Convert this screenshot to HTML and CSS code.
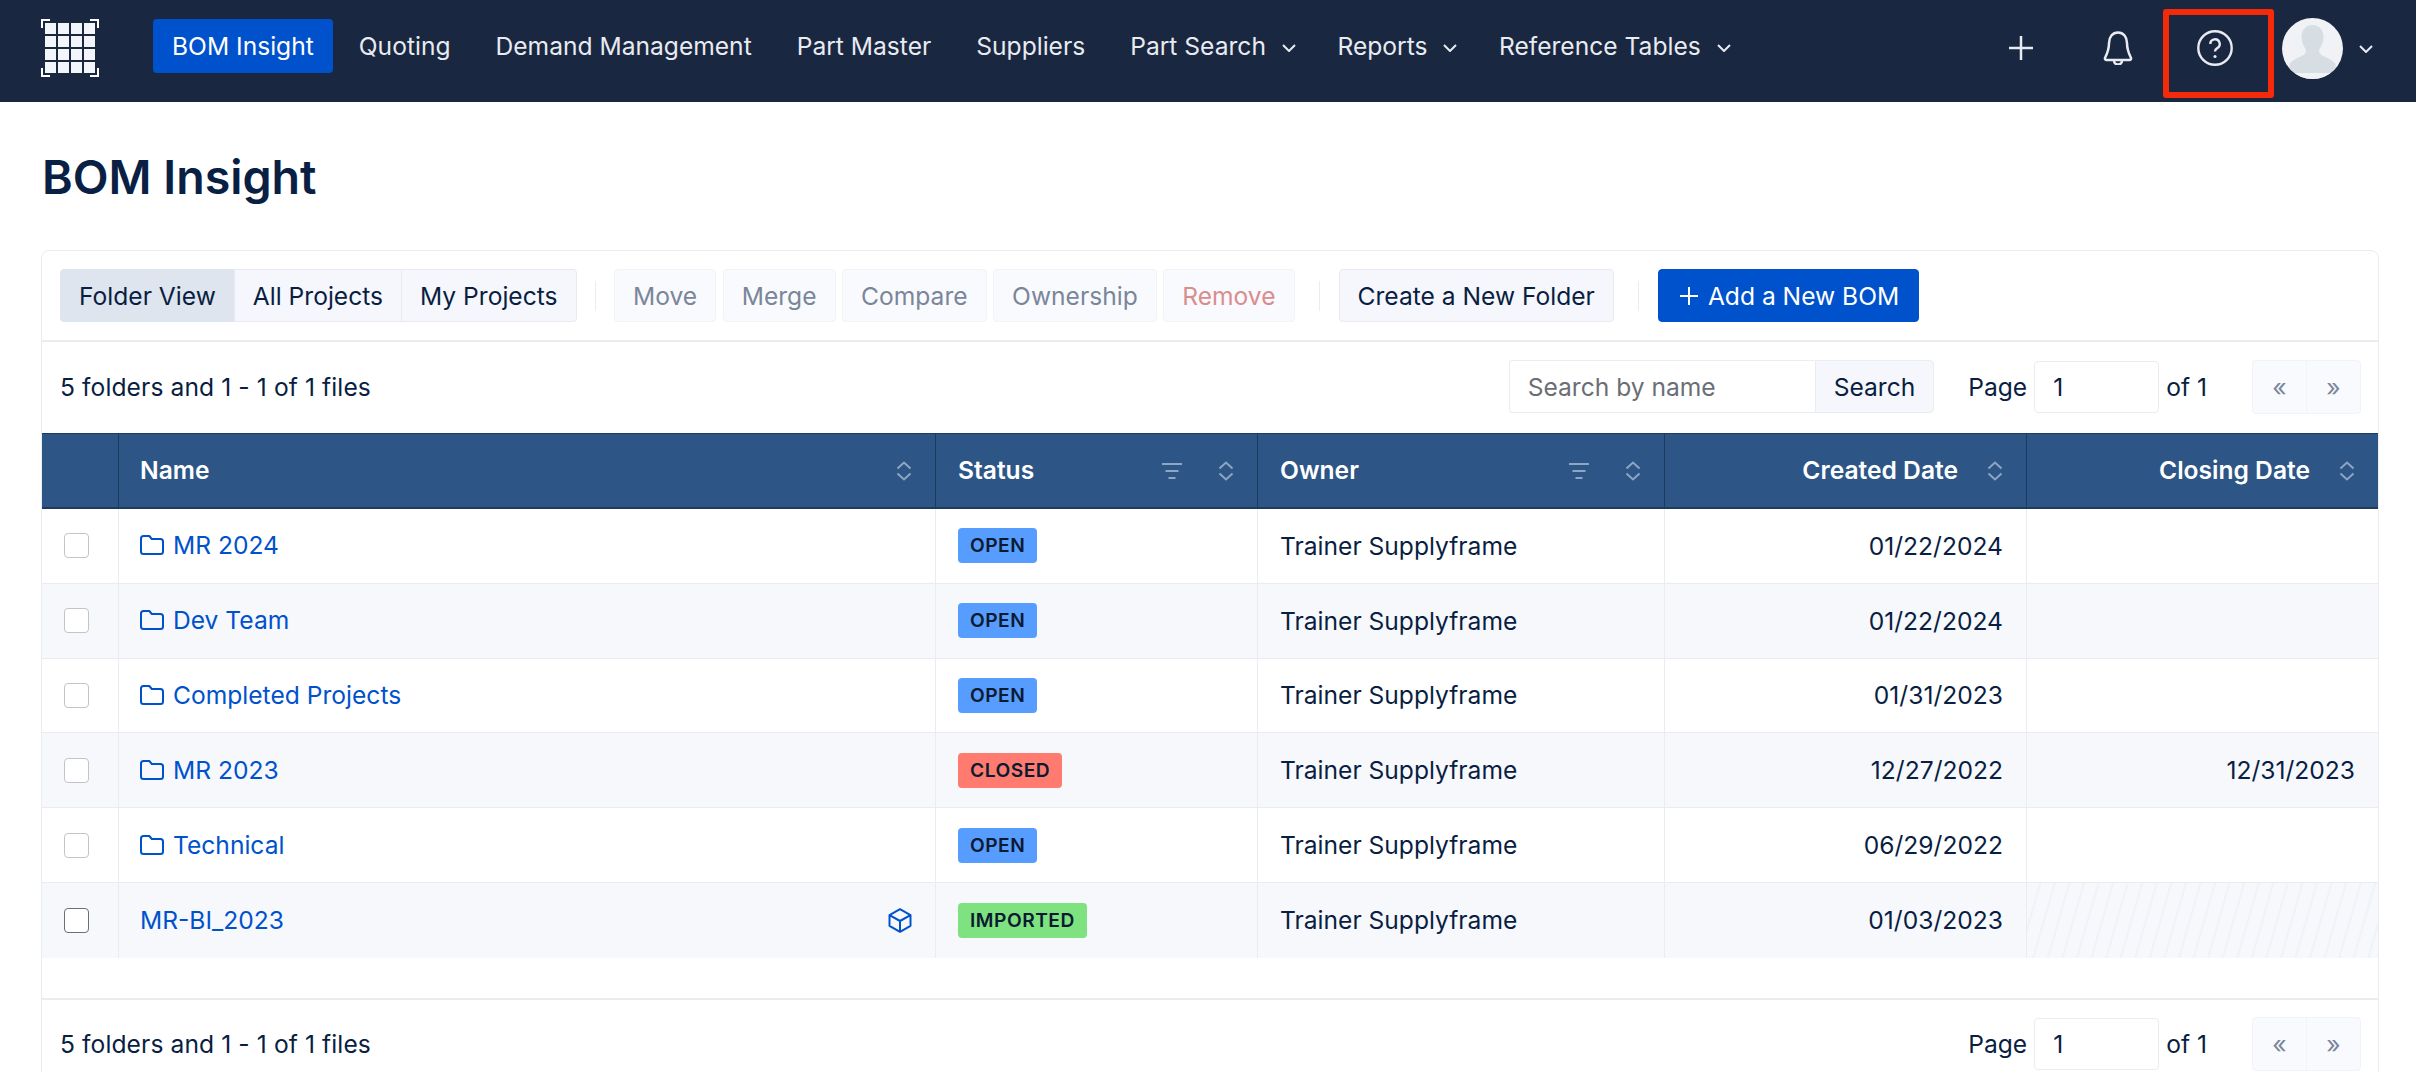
FILE: index.html
```html
<!DOCTYPE html>
<html lang="en">
<head>
    <meta charset="UTF-8">
    <title>BOM Insight</title>
    <link rel="stylesheet" href="styles.css">
</head>
<body>
    <svg class="sprites" width="0" height="0">
        <symbol id="sort" viewBox="0 0 16 20"><path d="M1.5 7.5L8 1.5l6.5 6M1.5 12.5L8 18.5l6.5-6" fill="none" stroke="currentColor" stroke-width="2"/></symbol>
        <symbol id="filter" viewBox="0 0 20 16"><path d="M0 1h20M3.500 8h13M6.500 15h7" fill="none" stroke="currentColor" stroke-width="2"/></symbol>
        <symbol id="folder" viewBox="0 0 24 20"><path d="M1 3.500C1 2 2 1 3.500 1h5.800l2.500 3h8.700C22 4 23 5 23 6.500v10c0 1.500-1 2.500-2.500 2.500h-17C2 19 1 18 1 16.500z" fill="none" stroke="currentColor" stroke-width="2" stroke-linejoin="round"/></symbol>
        <symbol id="chevron" viewBox="0 0 14 8"><path d="M1 1l6 6 6-6" fill="none" stroke="currentColor" stroke-width="2"/></symbol>
    </svg>

    <nav class="topbar">
        <svg class="logo" width="58" height="58" viewBox="0 0 58 58">
            <path d="M9 1H1v8M49 1h8v8M1 49v8h8M57 49v8h-8" fill="none" stroke="#fff" stroke-width="2"/>
            <g fill="#f4f5fa">
                <rect x="4" y="4" width="11" height="11"/><rect x="17" y="4" width="11" height="11"/><rect x="30" y="4" width="11" height="11"/><rect x="43" y="4" width="11" height="11"/>
                <rect x="4" y="17" width="11" height="11"/><rect x="17" y="17" width="11" height="11"/><rect x="30" y="17" width="11" height="11"/><rect x="43" y="17" width="11" height="11"/>
                <rect x="4" y="30" width="11" height="11"/><rect x="17" y="30" width="11" height="11"/><rect x="30" y="30" width="11" height="11"/><rect x="43" y="30" width="11" height="11"/>
                <rect x="4" y="43" width="11" height="11"/><rect x="17" y="43" width="11" height="11"/><rect x="30" y="43" width="11" height="11"/><rect x="43" y="43" width="11" height="11"/>
            </g>
        </svg>
        <div class="nav-links">
            <a class="nav-link active">BOM Insight</a>
            <a class="nav-link">Quoting</a>
            <a class="nav-link">Demand Management</a>
            <a class="nav-link">Part Master</a>
            <a class="nav-link">Suppliers</a>
            <a class="nav-link has-menu">Part Search <svg class="nav-chevron"><use href="#chevron"/></svg></a>
            <a class="nav-link has-menu">Reports <svg class="nav-chevron"><use href="#chevron"/></svg></a>
            <a class="nav-link has-menu">Reference Tables <svg class="nav-chevron"><use href="#chevron"/></svg></a>
        </div>
        <div class="nav-tools">
            <svg class="tool-plus" width="24" height="24" viewBox="0 0 24 24"><path d="M12 0v24M0 12h24" fill="none" stroke="currentColor" stroke-width="2.500"/></svg>
            <svg class="tool-bell" width="30" height="34" viewBox="0 0 30 34"><path d="M15 1.500C9.500 1.500 6 6 6 12c0 6-2 11-3.800 14.500-.7 1.300.1 2.500 1.500 2.500h22.600c1.400 0 2.200-1.200 1.500-2.500C26 23 24 18 24 12c0-6-3.500-10.500-9-10.500zM11 29.500a4 4 0 0 0 8 0" fill="none" stroke="currentColor" stroke-width="2.500"/></svg>
            <svg class="tool-help" width="36" height="36" viewBox="0 0 36 36"><circle cx="18" cy="18" r="16.700" fill="none" stroke="currentColor" stroke-width="2.400"/><path d="M13.300 14a4.700 4.700 0 1 1 7 4.100c-1.500.9-2.300 1.800-2.300 3.400" fill="none" stroke="currentColor" stroke-width="2.400"/><circle cx="18" cy="26.500" r="1.600" fill="currentColor"/></svg>
            <svg class="tool-avatar" width="61" height="61" viewBox="0 0 61 61">
                <clipPath id="avatarClip"><circle cx="30.500" cy="30.500" r="30.500"/></clipPath>
                <g clip-path="url(#avatarClip)">
                    <rect width="61" height="61" fill="#f0f2f5"/>
                    <path d="M30.500 7c-7 0-11 5-11 12 0 5 2 9 4 12 1 2 0 5-2 6-5 3-10 4-14 9v9h46v-9c-4-5-9-6-14-9-2-1-3-4-2-6 2-3 4-7 4-12 0-7-4-12-11-12z" fill="#d6dee3"/>
                    <rect y="55" width="61" height="6" fill="#f0f2f5"/>
                </g>
            </svg>
            <svg class="tool-chevron"><use href="#chevron"/></svg>
        </div>
        <div class="callout"></div>
    </nav>

    <main class="page">
        <h1>BOM Insight</h1>
        <section class="card">
            <div class="toolbar">
                <div class="btn-group">
                    <button class="btn selected">Folder View</button>
                    <button class="btn">All Projects</button>
                    <button class="btn">My Projects</button>
                </div>
                <span class="divider"></span>
                <button class="btn off">Move</button>
                <button class="btn off">Merge</button>
                <button class="btn off">Compare</button>
                <button class="btn off">Ownership</button>
                <button class="btn off danger">Remove</button>
                <span class="divider wide"></span>
                <button class="btn">Create a New Folder</button>
                <span class="divider wide"></span>
                <button class="btn primary"><svg width="18" height="18" viewBox="0 0 18 18"><path d="M9 0v18M0 9h18" fill="none" stroke="currentColor" stroke-width="2"/></svg> Add a New BOM</button>
            </div>

            <div class="info-row">
                <span class="count">5 folders and 1 - 1 of 1 files</span>
                <div class="search">
                    <input class="search-input" placeholder="Search by name">
                    <button class="btn search-btn">Search</button>
                </div>
                <div class="pager">
                    <span>Page</span>
                    <input class="page-input" value="1">
                    <span>of 1</span>
                    <div class="pager-arrows"><span>«</span><span>»</span></div>
                </div>
            </div>

            <table class="bom-table">
                <colgroup>
                    <col class="col-check"><col class="col-name"><col class="col-status"><col class="col-owner"><col class="col-created"><col class="col-closing">
                </colgroup>
                <thead>
                    <tr>
                        <th></th>
                        <th class="name-cell"><div class="th-inner"><span class="th-label">Name</span><svg class="ico-sort"><use href="#sort"/></svg></div></th>
                        <th><div class="th-inner"><span class="th-label">Status</span><svg class="ico-filter"><use href="#filter"/></svg><svg class="ico-sort"><use href="#sort"/></svg></div></th>
                        <th><div class="th-inner"><span class="th-label">Owner</span><svg class="ico-filter"><use href="#filter"/></svg><svg class="ico-sort"><use href="#sort"/></svg></div></th>
                        <th><div class="th-inner right"><span class="th-label">Created Date</span><svg class="ico-sort"><use href="#sort"/></svg></div></th>
                        <th><div class="th-inner right"><span class="th-label">Closing Date</span><svg class="ico-sort"><use href="#sort"/></svg></div></th>
                    </tr>
                </thead>
                <tbody>
                    <tr>
                        <td><span class="check"></span></td>
                        <td class="name-cell"><a class="item"><svg class="ico-folder"><use href="#folder"/></svg>MR 2024</a></td>
                        <td><span class="badge open">OPEN</span></td>
                        <td>Trainer Supplyframe</td>
                        <td class="num">01/22/2024</td>
                        <td class="num"></td>
                    </tr>
                    <tr>
                        <td><span class="check"></span></td>
                        <td class="name-cell"><a class="item"><svg class="ico-folder"><use href="#folder"/></svg>Dev Team</a></td>
                        <td><span class="badge open">OPEN</span></td>
                        <td>Trainer Supplyframe</td>
                        <td class="num">01/22/2024</td>
                        <td class="num"></td>
                    </tr>
                    <tr>
                        <td><span class="check"></span></td>
                        <td class="name-cell"><a class="item"><svg class="ico-folder"><use href="#folder"/></svg>Completed Projects</a></td>
                        <td><span class="badge open">OPEN</span></td>
                        <td>Trainer Supplyframe</td>
                        <td class="num">01/31/2023</td>
                        <td class="num"></td>
                    </tr>
                    <tr>
                        <td><span class="check"></span></td>
                        <td class="name-cell"><a class="item"><svg class="ico-folder"><use href="#folder"/></svg>MR 2023</a></td>
                        <td><span class="badge closed">CLOSED</span></td>
                        <td>Trainer Supplyframe</td>
                        <td class="num">12/27/2022</td>
                        <td class="num">12/31/2023</td>
                    </tr>
                    <tr>
                        <td><span class="check"></span></td>
                        <td class="name-cell"><a class="item"><svg class="ico-folder"><use href="#folder"/></svg>Technical</a></td>
                        <td><span class="badge open">OPEN</span></td>
                        <td>Trainer Supplyframe</td>
                        <td class="num">06/29/2022</td>
                        <td class="num"></td>
                    </tr>
                    <tr>
                        <td><span class="check on"></span></td>
                        <td class="name-cell">
                            <div class="file-cell">
                                <a class="item">MR-BI_2023</a>
                                <svg class="ico-cube" width="24" height="25" viewBox="0 0 24 25"><path d="M12 1.200l10.500 6v10.600L12 23.800 1.500 17.800V7.200zM1.500 7.200L12 13l10.500-5.800M12 13v10.800" fill="none" stroke="currentColor" stroke-width="2" stroke-linejoin="round"/></svg>
                            </div>
                        </td>
                        <td><span class="badge imported">IMPORTED</span></td>
                        <td>Trainer Supplyframe</td>
                        <td class="num">01/03/2023</td>
                        <td class="num hatch"></td>
                    </tr>
                </tbody>
            </table>

            <div class="info-row bottom">
                <span class="count">5 folders and 1 - 1 of 1 files</span>
                <div class="pager">
                    <span>Page</span>
                    <input class="page-input" value="1">
                    <span>of 1</span>
                    <div class="pager-arrows"><span>«</span><span>»</span></div>
                </div>
            </div>
        </section>
    </main>
</body>
</html>
```

FILE: styles.css
```css
html, body {
    height: 100%;
    overflow: hidden;
}
body {
    margin: 0;
    background-color: #ffffff;
    color: #091e42;
    font-family: 'Inter', 'Liberation Sans', sans-serif;
    font-size: 24.6px;
}
.sprites {
    position: absolute;
}
.topbar {
    position: relative;
    display: flex;
    align-items: center;
    height: 102px;
    padding: 0 43px 0 41px;
    box-sizing: border-box;
    background-color: #1a2740;
    color: #e8ebf2;
}
.logo {
    flex: none;
    margin-right: 54px;
    margin-top: -6px;
}
.nav-links {
    display: flex;
    align-items: center;
    gap: 7px;
    margin-top: -10px;
}
.nav-link {
    display: flex;
    align-items: center;
    height: 54px;
    padding: 0 19px;
    border-radius: 4px;
    white-space: nowrap;
}
.nav-link.has-menu {
    padding-right: 15.5px;
}
.nav-link.active {
    background-color: #0052cc;
    color: #ffffff;
}
.nav-chevron {
    width: 14px;
    height: 8px;
    margin-left: 16px;
    margin-top: 3px;
}
.nav-tools {
    display: flex;
    align-items: center;
    margin-left: auto;
    margin-top: -6px;
}
.tool-bell {
    margin-left: 70px;
}
.tool-help {
    margin-left: 64px;
}
.tool-avatar {
    margin-left: 49px;
}
.tool-chevron {
    width: 14px;
    height: 8px;
    margin-left: 16px;
    margin-top: 2px;
}
.callout {
    position: absolute;
    top: 9px;
    right: 142px;
    width: 111px;
    height: 89px;
    box-sizing: border-box;
    border: 6px solid #f52a0a;
    border-radius: 3px;
}
.page {
    padding: 0 37px 0 41px;
}
h1 {
    margin: 0;
    padding: 45px 0 43px 1px;
    font-size: 46.6px;
    line-height: 60px;
    font-weight: 600;
    color: #0a1f44;
}
.card {
    border: 1px solid #ebecf0;
    border-radius: 8px;
}
.toolbar {
    display: flex;
    align-items: center;
    gap: 6.5px;
    padding: 18px;
    border-bottom: 2px solid #ebecf0;
}
.btn {
    height: 53px;
    padding: 0 18px;
    box-sizing: border-box;
    border: 1px solid #e7eaf1;
    border-radius: 4px;
    background-color: #f5f7fc;
    color: #091e42;
    font-family: inherit;
    font-size: 24.6px;
    white-space: nowrap;
}
.btn-group {
    display: flex;
}
.btn-group .btn {
    border-radius: 0;
    margin-left: -1px;
}
.btn-group .btn:first-child {
    border-radius: 4px 0 0 4px;
    margin-left: 0;
}
.btn-group .btn:last-child {
    border-radius: 0 4px 4px 0;
}
.btn.selected {
    background-color: #dfe5ee;
    border-color: #dfe5ee;
}
.btn.off {
    background-color: #f9fafd;
    border-color: #f1f3f7;
    color: #7a869a;
}
.btn.off.danger {
    color: #d98d8d;
}
.btn.primary {
    display: flex;
    align-items: center;
    gap: 10px;
    padding: 0 19px 0 21px;
    background-color: #0052cc;
    border-color: #0052cc;
    color: #ffffff;
}
.divider {
    width: 1px;
    height: 30px;
    margin: 0 12px 0 11.5px;
    background-color: #ebecf0;
}
.divider.wide {
    margin-left: 18px;
}
.info-row {
    display: flex;
    align-items: center;
    height: 91px;
    padding: 0 17px 2px 18px;
    box-sizing: border-box;
}
.count {
    margin-right: auto;
    letter-spacing: 0.1px;
}
.search {
    display: flex;
    margin-right: 34px;
}
.search-input {
    width: 306px;
    height: 53px;
    padding: 0 18px;
    box-sizing: border-box;
    border: 1px solid #ebecf0;
    border-right: none;
    border-radius: 4px 0 0 4px;
    font-family: inherit;
    font-size: 24.6px;
}
.search-input::placeholder {
    color: #6b6e76;
}
.search-btn {
    border-radius: 0 4px 4px 0;
    border-color: #ebecf0;
}
.pager {
    display: flex;
    align-items: center;
}
.page-input {
    width: 125px;
    height: 52px;
    margin: 0 7px;
    padding: 0 18px;
    box-sizing: border-box;
    border: 1px solid #ebecf0;
    border-radius: 4px;
    color: #091e42;
    font-family: inherit;
    font-size: 24.6px;
}
.pager-arrows {
    display: flex;
    margin-left: 45px;
    border: 1px solid #f1f3f7;
    border-radius: 4px;
    background-color: #f9fafd;
    color: #7a869a;
}
.pager-arrows span {
    width: 53px;
    height: 52px;
    line-height: 52px;
    text-align: center;
}
.pager-arrows span:first-child {
    border-right: 1px solid #f1f3f7;
}
.bom-table {
    width: 2336px;
    border-collapse: separate;
    border-spacing: 0;
    table-layout: fixed;
}
.col-check { width: 77px; }
.col-name { width: 817px; }
.col-status { width: 322px; }
.col-owner { width: 407px; }
.col-created { width: 362px; }
.col-closing { width: 351px; }
th {
    height: 76px;
    padding: 0 23px 0 22px;
    box-sizing: border-box;
    background-color: #2d5686;
    border-top: 1px solid #1d3a5f;
    border-bottom: 2px solid #1d3a5f;
    border-right: 1px solid #1d3a5f;
    color: #ffffff;
    font-weight: 600;
    text-align: left;
}
th:last-child {
    border-right: none;
}
.th-inner {
    display: flex;
    align-items: center;
}
.th-inner.right {
    justify-content: flex-end;
}
.th-label {
    margin-right: auto;
    padding-bottom: 2px;
}
.th-inner.right .th-label {
    margin-right: 29px;
}
.ico-sort {
    width: 16px;
    height: 20px;
    color: #8ea5c4;
}
.ico-filter {
    width: 20px;
    height: 16px;
    margin-right: 36px;
    color: #8ea5c4;
}
td {
    height: 74.8px;
    padding: 0 23px 0 22px;
    box-sizing: border-box;
    border-bottom: 1px solid #ebecf0;
    border-right: 1px solid #ebecf0;
}
td:last-child {
    border-right: none;
}
th.name-cell, td.name-cell {
    padding-left: 21px;
}
tbody tr:nth-child(even) td {
    background-color: #f6f8fc;
}
tbody tr:last-child td {
    border-bottom: none;
}
.num {
    text-align: right;
}
tbody tr:nth-child(even) td.hatch {
    background-image: repeating-linear-gradient(106deg, transparent 0, transparent 11.5px, #f0f3f8 11.5px, #f0f3f8 14px);
}
.check {
    display: block;
    width: 25px;
    height: 25px;
    box-sizing: border-box;
    border: 1.500px solid #c1c4c9;
    border-radius: 4px;
    background-color: #ffffff;
}
.check.on {
    border-color: #6b6f78;
}
.item {
    display: inline-flex;
    align-items: center;
    color: #0052cc;
}
.ico-folder {
    width: 24px;
    height: 20px;
    margin-right: 9px;
    color: #0052cc;
}
.file-cell {
    display: flex;
    align-items: center;
    justify-content: space-between;
}
.ico-cube {
    color: #0052cc;
}
.badge {
    display: inline-block;
    height: 35px;
    padding: 0 12px;
    border-radius: 4px;
    color: #0a1a30;
    font-size: 19.2px;
    font-weight: 600;
    line-height: 35px;
    letter-spacing: 0.5px;
    vertical-align: middle;
}
.badge.open {
    background-color: #579dff;
}
.badge.closed {
    background-color: #ff7b70;
}
.badge.imported {
    background-color: #7de27f;
}
.info-row.bottom {
    margin-top: 40px;
    padding-bottom: 0;
    border-top: 2px solid #ebecf0;
}
```
